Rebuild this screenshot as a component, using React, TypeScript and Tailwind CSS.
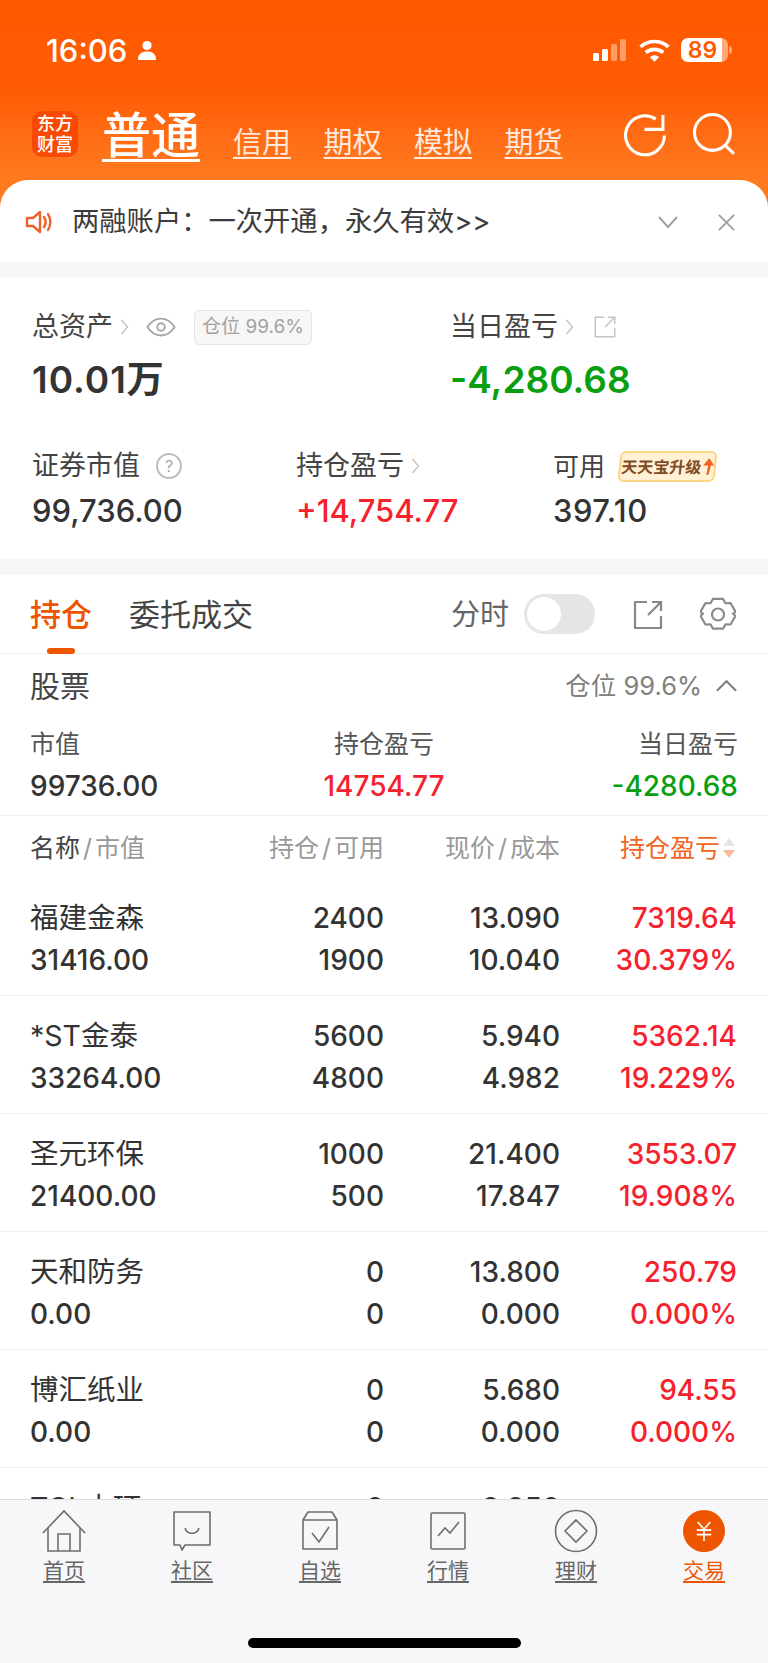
import React from "react";

const SANS = "font-['Inter','Noto_Sans_CJK_SC',sans-serif]";

const rows = [
  ["福建金森", "31416.00", "2400", "1900", "13.090", "10.040", "7319.64", "30.379%"],
  ["*ST金泰", "33264.00", "5600", "4800", "5.940", "4.982", "5362.14", "19.229%"],
  ["圣元环保", "21400.00", "1000", "500", "21.400", "17.847", "3553.07", "19.908%"],
  ["天和防务", "0.00", "0", "0", "13.800", "0.000", "250.79", "0.000%"],
  ["博汇纸业", "0.00", "0", "0", "5.680", "0.000", "94.55", "0.000%"],
  ["TCL中环", "0.00", "0", "0", "8.950", "0.000", "", ""],
];

function Chev({ className = "" }: { className?: string }) {
  return (
    <svg viewBox="0 0 10 20" className={"w-[11px] h-[20px] " + className} fill="none" stroke="#c4c4c4" strokeWidth="1.4">
      <path d="M2 3l6 7-6 7" />
    </svg>
  );
}

function Share({ className = "", stroke = "#c4c4c4", sw = 2 }: { className?: string; stroke?: string; sw?: number }) {
  return (
    <svg viewBox="0 0 32 32" className={className} fill="none" stroke={stroke} strokeWidth={sw}>
      <path d="M15 3H3v26h26V17" strokeLinejoin="round" />
      <path d="M16 16L29 3M20 3h9v9" />
    </svg>
  );
}

function Header() {
  return (
    <div className="h-[180px] shrink-0 bg-gradient-to-b from-[#ff5900] via-[#ff5c04] to-[#ff7a1f] text-white">
      <div className="h-[100px] pl-[46px] pr-[36px] pt-[35px] flex items-start justify-between">
        <div className="flex items-center h-[30px]">
          <span className="text-[31px] font-medium leading-none">16:06</span>
          <svg viewBox="0 0 20 20" className="w-[20px] h-[20px] ml-[10px]" fill="#fff">
            <circle cx="10" cy="5.5" r="4.6" />
            <path d="M1 19c0-5 4-7.5 9-7.5s9 2.500 9 7.500c0 .6-.4 1-1 1H2c-.6 0-1-.4-1-1z" />
          </svg>
        </div>
        <div className="flex items-center h-[30px]">
          <svg viewBox="0 0 34 22" className="w-[34px] h-[22px]">
            <rect x="0" y="14" width="6" height="8" rx="1.500" fill="#fff" />
            <rect x="9" y="10" width="6" height="12" rx="1.500" fill="#fff" />
            <rect x="18" y="5" width="6" height="17" rx="1.500" fill="#ffffff66" />
            <rect x="27" y="0" width="6" height="22" rx="1.500" fill="#ffffff66" />
          </svg>
          <svg viewBox="0 0 32 24" className="w-[33px] h-[25px] ml-[11px]" fill="none" stroke="#fff" strokeWidth="3.6">
            <path d="M2.500 8.500a20 20 0 0 1 27 0" />
            <path d="M7.500 14a13 13 0 0 1 17 0" />
            <path d="M16 23l-4.500-4.500a6.500 6.500 0 0 1 9 0z" fill="#fff" stroke="none" />
          </svg>
          <div className="ml-[10px] w-[47px] h-[24px] rounded-[7px] bg-[linear-gradient(90deg,#ffffff_88%,#ffffff77_88%)] text-[#ff5a00] text-[23px] font-semibold leading-[24px] pr-[4px] text-center">
            89
          </div>
          <div className="w-[3px] h-[8px] ml-[1px] rounded-r-full bg-[#ffffff77]" />
        </div>
      </div>
      <div className="flex items-start pl-[32px]">
        <div className="w-[46px] h-[46px] mt-[11px] rounded-[10px] bg-[#f94a05] text-[18px] leading-[21px] font-medium text-center flex items-center justify-center">
          <span>东方<br />财富</span>
        </div>
        <div className="ml-[24px] text-[49px] font-medium underline underline-offset-[6px] decoration-[3px] leading-[66px] mt-[3px]">普通</div>
        <div className="flex gap-[32.5px] ml-[33px] mt-[22px] text-[29px] leading-[42px] text-[#ffe8dc] underline underline-offset-[4px] decoration-[2px]">
          <span>信用</span>
          <span>期权</span>
          <span>模拟</span>
          <span>期货</span>
        </div>
        <svg viewBox="0 0 42 42" className="w-[43px] h-[43px] ml-[61px] mt-[14px]" fill="none" stroke="#fff" strokeWidth="3">
          <path d="M39.500 21A19 19 0 1 1 31 5" />
          <path d="M21 15h18V1" transform="translate(-1 0)" />
        </svg>
        <svg viewBox="0 0 42 42" className="w-[43px] h-[43px] ml-[26px] mt-[13px]" fill="none" stroke="#fff" strokeWidth="3">
          <circle cx="19" cy="19" r="17.500" />
          <path d="M31 31l9 9" />
        </svg>
      </div>
    </div>
  );
}

function Notice() {
  return (
    <div className="h-[82px] shrink-0 bg-[#ff7a1f]">
      <div className="h-[82px] rounded-t-[28px] bg-white flex items-center pl-[25px] pr-[32px] pt-[2px]">
        <svg viewBox="0 0 28 28" className="w-[28px] h-[28px]" fill="none" stroke="#f0602a" strokeWidth="2.400">
          <path d="M2 10h6l7-6v20l-7-6H2z" strokeLinejoin="round" />
          <path d="M19 9c2 3 2 7 0 10M23 6c3 5 3 11 0 16" strokeLinecap="round" />
        </svg>
        <span className="ml-[19px] text-[27.3px] text-[#3c3c3c] flex-1 whitespace-nowrap">{"两融账户\uFF1A一次开通\uFF0C永久有效>>"}</span>
        <svg viewBox="0 0 22 14" className="w-[22px] h-[14px]" fill="none" stroke="#a0a0a4" strokeWidth="2">
          <path d="M2 2l9 10 9-10" />
        </svg>
        <svg viewBox="0 0 20 20" className="w-[19px] h-[19px] ml-[38px]" fill="none" stroke="#a0a0a4" strokeWidth="2">
          <path d="M2 2l16 16M18 2L2 18" />
        </svg>
      </div>
    </div>
  );
}

function Summary() {
  return (
    <div className="mt-[16px] h-[281px] shrink-0 bg-white pt-[29px] text-[#333]">
      <div className="flex pl-[32px]">
        <div className="w-[418px]">
          <div className="h-[40px] flex items-center">
            <span className="text-[27px] text-[#444]">总资产</span>
            <Chev className="ml-[6px]" />
            <svg viewBox="0 0 32 22" className="w-[30px] h-[22px] ml-[16px]" fill="none" stroke="#a6a6a6" strokeWidth="2">
              <path d="M1.500 11C6 4 11 2 16 2s10 2 14.500 9C26 18 21 20 16 20S6 18 1.500 11z" />
              <circle cx="16" cy="11" r="4" />
            </svg>
            <div className="ml-[18px] w-[118px] h-[35px] rounded-[5px] border border-[#e4e4e4] bg-[#f6f6f6] text-[19px] text-[#a2a2a2] flex items-center justify-center">仓位 99.6%</div>
          </div>
          <div className="mt-[8px] text-[37px] leading-[50px] font-semibold tracking-[1px]">10.01万</div>
        </div>
        <div>
          <div className="h-[40px] flex items-center">
            <span className="text-[27px] text-[#444]">当日盈亏</span>
            <Chev className="ml-[6px]" />
            <Share className="w-[24px] h-[24px] ml-[18px]" />
          </div>
          <div className="mt-[8px] text-[37px] leading-[50px] font-semibold text-[#0a9f10]">-4,280.68</div>
        </div>
      </div>
      <div className="flex pl-[32px] mt-[41px]">
        <div className="w-[264px]">
          <div className="h-[40px] flex items-center">
            <span className="text-[27px] text-[#444]">证券市值</span>
            <div className="ml-[16px] w-[26px] h-[26px] rounded-full border-2 border-[#bdbdbd] text-[16px] text-[#a8a8a8] flex items-center justify-center">?</div>
          </div>
          <div className="mt-[3px] text-[31px] leading-[44px] font-medium">99,736.00</div>
        </div>
        <div className="w-[257px]">
          <div className="h-[40px] flex items-center">
            <span className="text-[27px] text-[#444]">持仓盈亏</span>
            <Chev className="ml-[6px]" />
          </div>
          <div className="mt-[3px] text-[31px] leading-[44px] font-medium text-[#f5222d]">+14,754.77</div>
        </div>
        <div>
          <div className="h-[40px] flex items-center">
            <span className="text-[26px] text-[#444]">可用</span>
            <div className="ml-[14px] -skew-x-6 w-[97px] h-[31px] rounded-[6px] border-2 border-[#fbd681] bg-[#fff0d6] text-[16px] font-bold text-[#7f4a22] flex items-center justify-center whitespace-nowrap">
              天天宝升级
              <svg viewBox="0 0 12 18" className="w-[11px] h-[17px] ml-[1px]" fill="#f5611c">
                <path d="M6 0l6 8H8.500L7 18H4.500L5.500 8H0z" />
              </svg>
            </div>
          </div>
          <div className="mt-[3px] text-[31px] leading-[44px] font-medium tracking-[0.5px]">397.10</div>
        </div>
      </div>
    </div>
  );
}

function Tabs() {
  return (
    <div className="mt-[16px] h-[79px] shrink-0 bg-white border-b border-[#f0f0f0] flex pl-[30px] pr-[30px] pt-[19px] items-start">
      <div className="flex flex-col items-center w-[62px]">
        <span className="text-[31px] leading-[42px] font-medium text-[#ee5500]">持仓</span>
        <div className="w-[28px] h-[6px] rounded-full bg-[#ee5500] mt-[12px]" />
      </div>
      <span className="ml-[37px] text-[31px] leading-[42px] text-[#444]">委托成交</span>
      <span className="ml-[198px] text-[29px] leading-[42px] text-[#666]">分时</span>
      <div className="ml-[15px] w-[71px] h-[40px] rounded-full bg-[#e5e5e8] p-[3px]">
        <div className="w-[34px] h-[34px] rounded-full bg-white" />
      </div>
      <Share className="w-[32px] h-[32px] ml-[37px] mt-[5px]" stroke="#888" sw={2.200} />
      <svg viewBox="0 0 36 36" className="w-[36px] h-[36px] ml-[36px] mt-[3px]" fill="none" stroke="#8a8a8a" strokeWidth="2.200">
        <path d="M13 2.500h10l2.500 4.500 5-.2 5 9-2.500 2.200 2.500 2.200-5 9-5-.2-2.500 4.500H13l-2.500-4.500-5 .2-5-9 2.500-2.200-2.500-2.200 5-9 5 .2z" strokeLinejoin="round" transform="translate(0 -0.500) scale(1 0.960)" />
        <circle cx="18" cy="17.500" r="6" />
      </svg>
    </div>
  );
}

function Holdings() {
  return (
    <div className="bg-white border-b border-[#f0f0f0] px-[30px] shrink-0 h-[162px]">
      <div className="h-[64px] flex items-center justify-between">
        <span className="text-[30px] text-[#444]">股票</span>
        <div className="flex items-center">
          <span className="text-[25.5px] text-[#808080]">仓位 99.6%</span>
          <svg viewBox="0 0 24 14" className="w-[23px] h-[14px] ml-[13px]" fill="none" stroke="#808080" strokeWidth="2.200">
            <path d="M2 12L12 2l10 10" />
          </svg>
        </div>
      </div>
      <div className="grid grid-cols-3 text-[25px] leading-[36px] text-[#555] mt-[8px]">
        <span>市值</span>
        <span className="text-center">持仓盈亏</span>
        <span className="text-right">当日盈亏</span>
      </div>
      <div className="grid grid-cols-3 text-[28px] leading-[36px] font-medium mt-[6px]">
        <span className="text-[#333]">99736.00</span>
        <span className="text-center text-[#f5222d]">14754.77</span>
        <span className="text-right text-[#0a9f10]">-4280.68</span>
      </div>
    </div>
  );
}

function Table() {
  return (
    <div className="bg-white flex-1 min-h-0 overflow-hidden">
      <div className="h-[62px] pl-[30px] pr-[31px] flex items-start pt-[14px] text-[25px] leading-[36px] text-[#999]">
        <div className="w-[240px]">
          <span className="text-[#444]">名称</span>
          <span className="mx-[3px]">/</span>市值
        </div>
        <div className="w-[114px] flex justify-end whitespace-nowrap">
          持仓<span className="mx-[3px]">/</span>可用
        </div>
        <div className="w-[176px] flex justify-end whitespace-nowrap">
          现价<span className="mx-[3px]">/</span>成本
        </div>
        <div className="flex-1 flex justify-end items-center">
          <span className="text-[#f26522] mr-[1px]">持仓盈亏</span>
          <svg viewBox="0 0 16 28" className="w-[16px] h-[28px]">
            <path d="M8 4l6 8H2z" fill="#e5e5e5" />
            <path d="M8 24l6-8H2z" fill="#fcb89a" />
          </svg>
        </div>
      </div>
      {rows.map((r) => (
        <div key={r[0]} className="h-[118px] border-b border-[#f0f0f0] pl-[30px] pr-[31px] pt-[19px] flex text-[28px] leading-[42px] font-medium text-[#333]">
          <div className="w-[240px]">
            <div className="font-normal text-[28.5px] text-[#333]">{r[0]}</div>
            <div>{r[1]}</div>
          </div>
          <div className="w-[114px] text-right">
            <div>{r[2]}</div>
            <div>{r[3]}</div>
          </div>
          <div className="w-[176px] text-right">
            <div>{r[4]}</div>
            <div>{r[5]}</div>
          </div>
          <div className="flex-1 text-right text-[#f5222d]">
            <div>{r[6]}</div>
            <div>{r[7]}</div>
          </div>
        </div>
      ))}
    </div>
  );
}

const S = { fill: "none", stroke: "#6e6e6e", strokeWidth: 1.600 };

function NavIcon({ i }: { i: number }) {
  if (i === 0)
    return (
      <svg viewBox="0 0 44 44" className="w-[44px] h-[44px]" {...S}>
        <path d="M1 24L22 2l21 22" />
        <path d="M6 19v23h32V19" />
        <path d="M16 42V25h12v17" />
      </svg>
    );
  if (i === 1)
    return (
      <svg viewBox="0 0 44 44" className="w-[44px] h-[44px]" {...S}>
        <path d="M4 3h36v33H15l-3 5-2-5H4z" strokeLinejoin="round" />
        <path d="M15 19c2 7 12 7 14 0" />
      </svg>
    );
  if (i === 2)
    return (
      <svg viewBox="0 0 44 44" className="w-[44px] h-[44px]" {...S}>
        <path d="M5 11l5-8h24l5 8v29H5z" strokeLinejoin="round" />
        <path d="M5 11h34" />
        <path d="M14 24l7 9 10-15" />
      </svg>
    );
  if (i === 3)
    return (
      <svg viewBox="0 0 44 44" className="w-[44px] h-[44px]" {...S}>
        <rect x="5" y="4" width="34" height="36" rx="1" />
        <path d="M12 27l7-8 5 5 9-11" />
      </svg>
    );
  if (i === 4)
    return (
      <svg viewBox="0 0 44 44" className="w-[44px] h-[44px]" {...S}>
        <circle cx="22" cy="22" r="20.500" />
        <path d="M22 11l11 11-11 11-11-11z" />
      </svg>
    );
  return (
    <div className="w-[42px] h-[42px] my-[1px] rounded-full bg-[#ee5500] flex items-center justify-center">
      <svg viewBox="0 0 20 24" className="w-[18px] h-[22px]" fill="none" stroke="#fff" strokeWidth="1.800">
        <path d="M3 2l7 8 7-8M10 10v13M2 11h16M2 16h16" />
      </svg>
    </div>
  );
}

function TabBar() {
  const items = ["首页", "社区", "自选", "行情", "理财", "交易"];
  return (
    <div className="h-[164px] shrink-0 bg-[#f7f7f9] border-t border-[#dddddd] flex flex-col">
      <div className="grid grid-cols-6 pt-[9px]">
        {items.map((t, i) => (
          <div key={t} className="flex flex-col items-center">
            <NavIcon i={i} />
            <span className={"mt-[3px] text-[21px] leading-[30px] underline underline-offset-[3px] " + (i === 5 ? "text-[#ee5500]" : "text-[#666]")}>{t}</span>
          </div>
        ))}
      </div>
      <div className="mt-[52px] mx-auto w-[273px] h-[10px] rounded-full bg-black" />
    </div>
  );
}

export default function App() {
  return (
    <div className={"w-[768px] h-[1663px] overflow-hidden flex flex-col bg-[#f6f7f9] " + SANS}>
      <Header />
      <Notice />
      <Summary />
      <Tabs />
      <Holdings />
      <Table />
      <TabBar />
    </div>
  );
}
